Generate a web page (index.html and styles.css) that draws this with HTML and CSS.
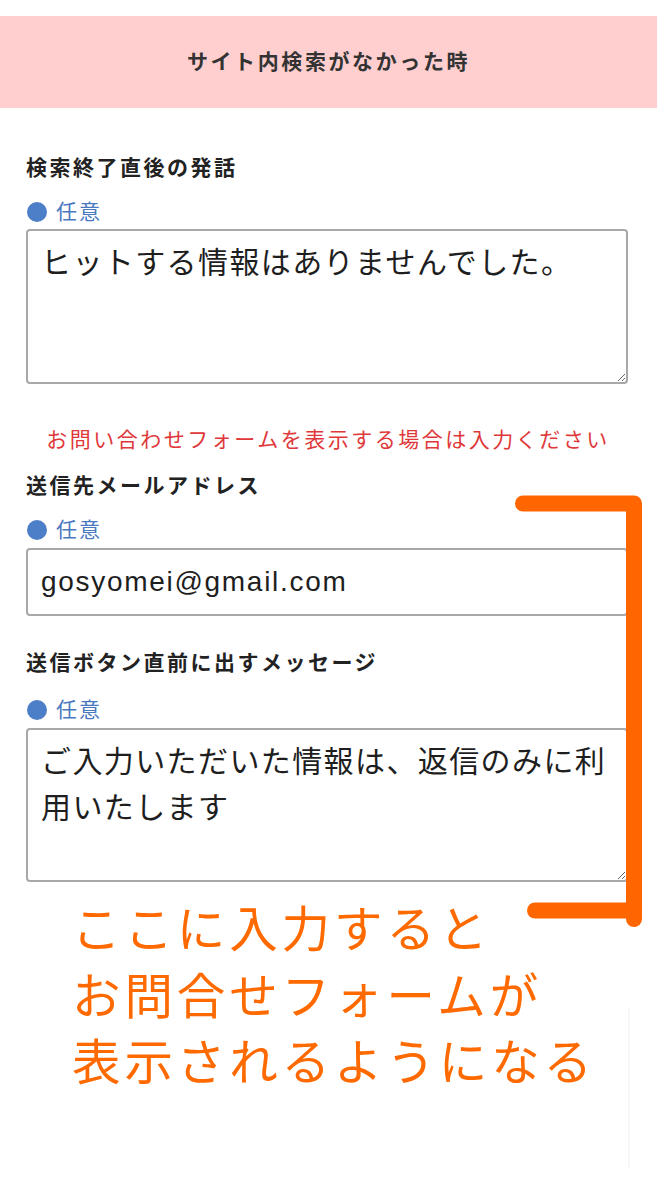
FILE: index.html
```html
<!DOCTYPE html>
<html lang="ja">
<head>
<meta charset="utf-8">
<title>サイト内検索がなかった時</title>
<link rel="stylesheet" href="styles.css">
</head>
<body>
<div class="page">
  <header class="banner">
    <h1 class="banner-title">サイト内検索がなかった時</h1>
  </header>

  <main class="form">
    <section class="field">
      <p class="label">検索終了直後の発話</p>
      <p class="optional"><span class="dot"></span><span>任意</span></p>
      <textarea class="textbox tb-first">ヒットする情報はありませんでした。</textarea>
    </section>

    <p class="notice">お問い合わせフォームを表示する場合は入力ください</p>

    <section class="field field-mail">
      <p class="label">送信先メールアドレス</p>
      <p class="optional"><span class="dot"></span><span>任意</span></p>
      <input class="inputbox" type="text" value="gosyomei@gmail.com">
    </section>

    <section class="field field-msg">
      <p class="label">送信ボタン直前に出すメッセージ</p>
      <p class="optional optional-wide"><span class="dot"></span><span>任意</span></p>
      <textarea class="textbox tb-second">ご入力いただいた情報は、返信のみに利用いたします</textarea>
    </section>

    <p class="callout">ここに入力すると<br>お問合せフォームが<br>表示されるようになる</p>
  </main>

  <svg class="bracket" width="668" height="1200" viewBox="0 0 668 1200" aria-hidden="true">
    <path d="M523 503.5 H634 V919" fill="none" stroke="#ff6600" stroke-width="16" stroke-linecap="round" stroke-linejoin="round"/>
    <path d="M535 910.5 H634" fill="none" stroke="#ff6600" stroke-width="16" stroke-linecap="round"/>
  </svg>
  <div class="ghost-line"></div>
</div>
</body>
</html>
```

FILE: styles.css
```css
* { box-sizing: border-box; }

html, body {
  margin: 0;
  padding: 0;
  background: #ffffff;
}

body {
  font-family: "Liberation Sans", "Noto Sans CJK JP", sans-serif;
  color: #222;
}

.page {
  position: relative;
  width: 668px;
  min-height: 1200px;
  overflow: hidden;
}

.banner {
  margin-top: 16px;
  width: 657px;
  height: 92px;
  background: #ffcfcf;
  display: flex;
  align-items: center;
  justify-content: center;
}

.banner-title {
  margin: 0;
  font-size: 21px;
  line-height: 30px;
  font-weight: 700;
  letter-spacing: 2.6px;
  color: #333;
}

.form {
  padding: 45px 0 0 26px;
  width: 628px;
}

.field {
  display: flex;
  flex-direction: column;
}

.label {
  margin: 0;
  font-size: 21px;
  line-height: 30px;
  font-weight: 700;
  letter-spacing: 2.5px;
  color: #222;
}

.optional {
  margin: 14px 0 0;
  display: flex;
  align-items: center;
  gap: 9px;
  font-size: 21px;
  line-height: 30px;
  letter-spacing: 2px;
  color: #4a78c0;
  padding-left: 1px;
}

.optional-wide { margin-top: 17px; }

.dot {
  width: 20px;
  height: 20px;
  border-radius: 50%;
  background: #4d7fc8;
  flex: none;
}

.textbox {
  display: block;
  margin-top: 2px;
  width: 602px;
  height: 155px;
  border: 2px solid #a8a8a8;
  border-radius: 4px;
  padding: 9px 13px;
  font-family: "Liberation Sans", "Noto Sans CJK JP", sans-serif;
  font-size: 30px;
  line-height: 46px;
  letter-spacing: 1.4px;
  color: #1e1e1e;
  background: #fff;
  resize: both;
  overflow: hidden;
}

.tb-second {
  margin-top: 3px;
  height: 154px;
}

.notice {
  margin: 41px 0 0;
  width: 604px;
  text-align: center;
  font-size: 21px;
  line-height: 30px;
  letter-spacing: 2.5px;
  color: #e0383a;
}

.field-mail { margin-top: 16px; }

.inputbox {
  display: block;
  margin-top: 3px;
  width: 602px;
  height: 68px;
  border: 2px solid #a8a8a8;
  border-radius: 4px;
  padding: 0 13px;
  font-family: "Liberation Sans", "Noto Sans CJK JP", sans-serif;
  font-size: 28px;
  letter-spacing: 1.7px;
  color: #1e1e1e;
  background: #fff;
}

.field-msg { margin-top: 32px; }

.callout {
  margin: 15px 0 0;
  padding-left: 46px;
  font-size: 48.5px;
  line-height: 66.5px;
  letter-spacing: 3.9px;
  color: #ff6a00;
}

.bracket {
  position: absolute;
  left: 0;
  top: 0;
  pointer-events: none;
}

.ghost-line {
  position: absolute;
  left: 628px;
  top: 1008px;
  width: 2px;
  height: 160px;
  background: #f7f7f7;
}
```
